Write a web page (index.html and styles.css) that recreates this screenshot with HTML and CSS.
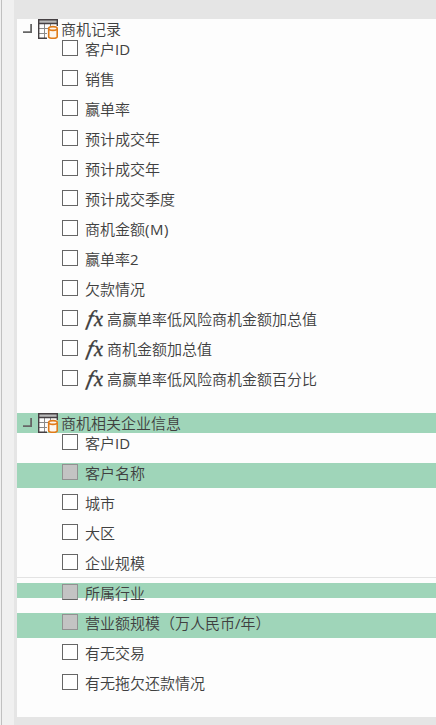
FILE: index.html
```html
<!DOCTYPE html>
<html lang="zh-CN">
<head>
<meta charset="utf-8">
<title>字段列表</title>
<link rel="stylesheet" href="styles.css">
</head>
<body>
<svg class="defs" width="0" height="0" aria-hidden="true">
  <symbol id="table" viewBox="0 0 20 20">
    <path fill="#fdfdfd" d="M1 1h18v18H1z"/>
    <path fill="#b9b9b9" d="M1 1h18v3H1z"/>
    <path fill="none" stroke="#8a8a8a" d="M1 9.500h9M1 14.500h8M6.500 5v14M12.500 5v3"/>
    <path fill="none" stroke="#454043" stroke-width="1.4" d="M9 19.300H.7V.7h18.600V7M1 4.500h18"/>
    <path fill="#fdf6ee" stroke="#e07b18" stroke-width="1.6" d="M10.700 9.500v8.200c0 2.100 8.500 2.100 8.500 0V9.500"/>
    <ellipse cx="14.950" cy="9.500" rx="4.250" ry="1.900" fill="#fdf6ee" stroke="#e07b18" stroke-width="1.6"/>
  </symbol>
  <symbol id="arrow" viewBox="0 0 9 9">
    <path fill="none" stroke="#666" stroke-width="1.800" d="M0 8.100h8.100V0"/>
  </symbol>
</svg>
<main class="panel">
  <section class="group">
    <h2 class="head"><svg class="arrow"><use href="#arrow"/></svg><svg class="table"><use href="#table"/></svg><span>商机记录</span></h2>
    <ul class="fields">
      <li><i class="box"></i><span>客户<span class="latin">ID</span></span></li>
      <li><i class="box"></i><span>销售</span></li>
      <li><i class="box"></i><span>赢单率</span></li>
      <li><i class="box"></i><span>预计成交年</span></li>
      <li><i class="box"></i><span>预计成交年</span></li>
      <li><i class="box"></i><span>预计成交季度</span></li>
      <li><i class="box"></i><span>商机金额<span class="latin unit">(M)</span></span></li>
      <li><i class="box"></i><span>赢单率<span class="latin">2</span></span></li>
      <li><i class="box"></i><span>欠款情况</span></li>
      <li><i class="box"></i><b class="fx"><span class="f">f</span><span class="x">x</span></b><span>高赢单率低风险商机金额加总值</span></li>
      <li><i class="box"></i><b class="fx"><span class="f">f</span><span class="x">x</span></b><span>商机金额加总值</span></li>
      <li><i class="box"></i><b class="fx"><span class="f">f</span><span class="x">x</span></b><span>高赢单率低风险商机金额百分比</span></li>
    </ul>
  </section>
  <section class="group">
    <h2 class="head marked"><svg class="arrow"><use href="#arrow"/></svg><svg class="table"><use href="#table"/></svg><span>商机相关企业信息</span></h2>
    <ul class="fields">
      <li><i class="box"></i><span>客户<span class="latin">ID</span></span></li>
      <li class="marked"><i class="box"></i><span>客户名称</span></li>
      <li><i class="box"></i><span>城市</span></li>
      <li><i class="box"></i><span>大区</span></li>
      <li class="ruled"><i class="box"></i><span>企业规模</span></li>
      <li class="marked short"><i class="box"></i><span>所属行业</span></li>
      <li class="marked"><i class="box"></i><span>营业额规模（万人民币<span class="latin">/</span>年）</span></li>
      <li><i class="box"></i><span>有无交易</span></li>
      <li><i class="box"></i><span>有无拖欠还款情况</span></li>
    </ul>
  </section>
</main>
</body>
</html>
```
FILE: styles.css
```css
* { box-sizing: border-box; margin: 0; padding: 0; }

body {
  height: 725px;
  padding: 19px 0 8px 17px;
  overflow: hidden;
  background: linear-gradient(90deg, #f0f0f0 1px, #c0c0c0 1px 2px, #f0f0f0 2px 14px, #e5e5e5 14px);
  color: #404040;
  font: 15px/20px "Open Sans", "Noto Sans CJK SC", sans-serif;
  font-weight: 350;
}

.defs { position: absolute; }

.panel {
  display: flex;
  flex-direction: column;
  gap: 14px;
  height: 698px;
  background: #fdfdfd;
}

.head {
  display: flex;
  height: 20px;
  padding-left: 6px;
  font-size: 15px;
  font-weight: inherit;
}

.arrow { width: 9px; height: 9px; margin-top: 5px; }
.table { width: 20px; height: 20px; margin: 0 3px 0 6px; }
.head span { line-height: 21px; }

.fields { list-style: none; }

.fields li {
  display: flex;
  height: 25px;
  margin-bottom: 5px;
  padding: 1px 0 0 45px;
  line-height: 18px;
  white-space: nowrap;
}

.box {
  width: 16px;
  height: 16px;
  margin-right: 7px;
  border: 1px solid #666;
  background: #fff;
}

.marked { background-color: #9fd5b9; }
.marked .box { border-color: #919191; background: #c3c3c3; }

.fields .short { height: 15px; margin-bottom: 15px; }
.short .box { border-bottom-color: #666; }

.fields .ruled {
  height: 30px;
  margin-bottom: 0;
  background: linear-gradient(#e3e3e3, #e3e3e3) 0 24px / 100% 1px no-repeat;
}

.latin { font-weight: 400; }
.unit { letter-spacing: .5px; }

.fx {
  display: flex;
  width: 22px;
  height: 20px;
  color: #3c3c3c;
  font-family: "Liberation Serif", serif;
  font-style: italic;
  font-weight: 400;
  -webkit-text-stroke: .4px;
}

.f {
  width: 9px;
  padding-left: 2px;
  font-size: 21px;
  line-height: 16px;
  transform: skewX(-12deg);
}

.x { font-size: 20px; line-height: 18px; }
```
